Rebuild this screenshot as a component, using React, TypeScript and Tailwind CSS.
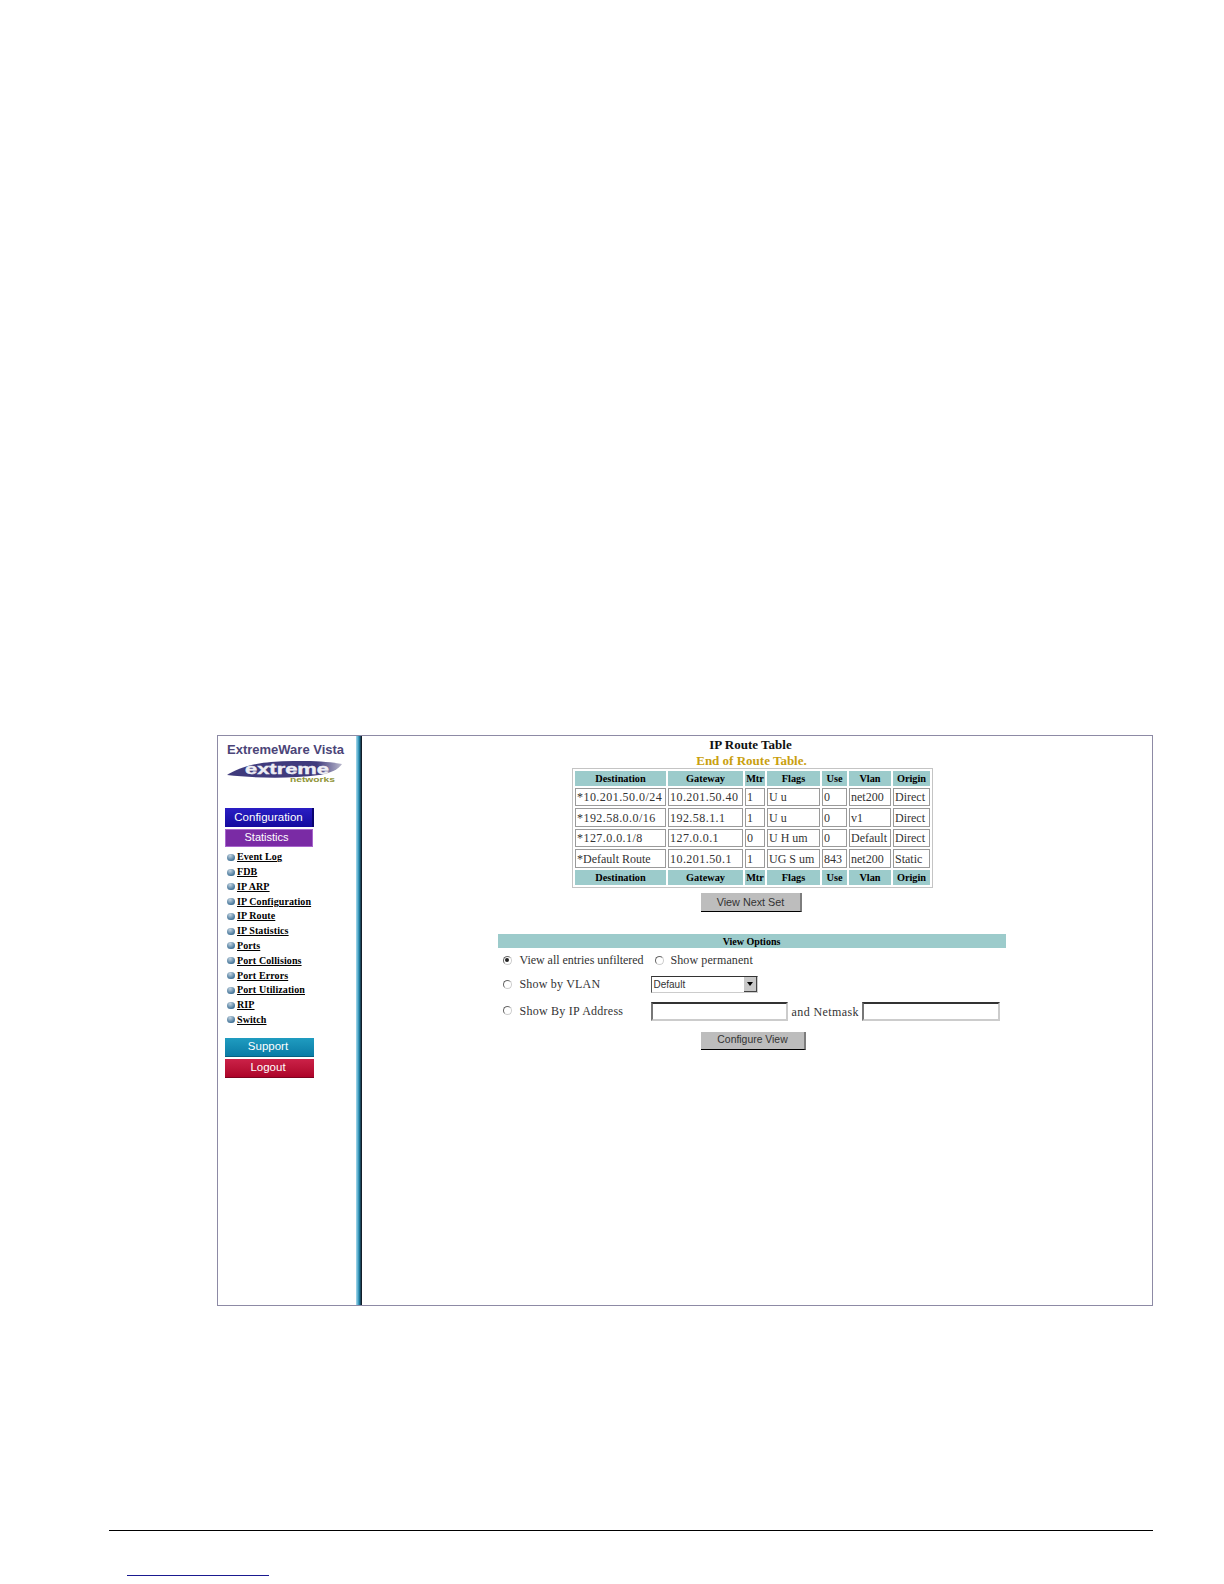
// Route table screen of the switch's web console, as printed on a manual page.
import type { ReactNode } from "react";

const NAV_ITEMS = [
  "Event Log",
  "FDB",
  "IP ARP",
  "IP Configuration",
  "IP Route",
  "IP Statistics",
  "Ports",
  "Port Collisions",
  "Port Errors",
  "Port Utilization",
  "RIP",
  "Switch",
];

const COLUMNS = ["Destination", "Gateway", "Mtr", "Flags", "Use", "Vlan", "Origin"];

const ROUTES = [
  { height: "h-[18px]", cells: ["*10.201.50.0/24", "10.201.50.40", "1", "U u", "0", "net200", "Direct"] },
  { height: "h-[19px]", cells: ["*192.58.0.0/16", "192.58.1.1", "1", "U u", "0", "v1", "Direct"] },
  { height: "h-[18px]", cells: ["*127.0.0.1/8", "127.0.0.1", "0", "U H um", "0", "Default", "Direct"] },
  { height: "h-[19px]", cells: ["*Default Route", "10.201.50.1", "1", "UG S um", "843", "net200", "Static"] },
];

function SideButton({ className, children }: { className: string; children: ReactNode }) {
  return (
    <div
      className={`flex items-center justify-center font-['Liberation_Sans',sans-serif] leading-none text-white ${className}`}
    >
      {children}
    </div>
  );
}

function Logo() {
  return (
    <svg viewBox="0 0 116 22" className="mt-[4px] ml-[2px] block h-[22px] w-[116px]">
      <defs>
        <linearGradient id="swoosh" x1="0" x2="1" y1="0" y2="0">
          <stop offset="0" stopColor="#3f3a7c" />
          <stop offset="0.78" stopColor="#3f3a7c" />
          <stop offset="1" stopColor="#b9b8cc" />
        </linearGradient>
      </defs>
      <path d="M0 14 C10 8 22 3 44 1 C70 -1 100 0 115 3 C112 8 104 12 92 14 C62 18 26 17 0 14 Z" fill="url(#swoosh)" />
      <text
        x="18"
        y="13"
        fontFamily="Liberation Sans, sans-serif"
        fontWeight="700"
        fontSize="14"
        textLength="84"
        lengthAdjust="spacingAndGlyphs"
        fill="#eeeef4"
        stroke="#eeeef4"
        strokeWidth="0.4"
      >
        extreme
      </text>
      <text
        x="63"
        y="20.5"
        fontFamily="Liberation Sans, sans-serif"
        fontWeight="700"
        fontSize="6.5"
        textLength="45"
        lengthAdjust="spacingAndGlyphs"
        fill="#8f9436"
      >
        networks
      </text>
    </svg>
  );
}

function Sidebar() {
  return (
    <aside className="flex w-[138px] shrink-0 flex-col pl-[7px] pt-[6px]">
      <div className="pl-[2px] font-['Liberation_Sans',sans-serif] text-[13px] font-bold leading-[15px] text-[#4b4578]">
        ExtremeWare Vista
      </div>
      <Logo />
      <div className="mt-[25px] flex flex-col gap-[2px]">
        <SideButton className="h-[19px] w-[89px] border-r-2 border-r-[#0a0470] bg-gradient-to-b from-[#2a1ec4] to-[#14099e] text-[11.5px]">
          Configuration
        </SideButton>
        <SideButton className="h-[18px] w-[88px] border border-[#a766cc] bg-[#7a2ba5] pb-[2px] pr-[5px] text-[11px]">
          Statistics
        </SideButton>
      </div>
      <ul className="mt-[3px] grid auto-rows-[14.77px] pl-[2px]">
        {NAV_ITEMS.map((item) => (
          <li key={item} className="flex items-center gap-[2px]">
            <span className="h-[7px] w-[8px] shrink-0 rounded-full bg-[radial-gradient(circle_at_40%_25%,#c3d3e0,#3f7196_75%)]" />
            <a className="font-['Liberation_Serif',serif] text-[10px] font-bold leading-none tracking-[0.1px] text-black underline">
              {item}
            </a>
          </li>
        ))}
      </ul>
      <div className="mt-[10.5px] flex w-[89px] flex-col gap-[2px]">
        <SideButton className="h-[19px] border-b border-b-[#06607f] bg-gradient-to-b from-[#1f9cc0] to-[#0a7ca6] pr-[3px] pt-[1px] text-[11.5px]">
          Support
        </SideButton>
        <SideButton className="h-[19px] border-b border-b-[#7d0320] bg-gradient-to-b from-[#cb2148] to-[#ad0329] pr-[3px] pt-[1px] text-[11.5px]">
          Logout
        </SideButton>
      </div>
    </aside>
  );
}

function HeadRow() {
  return (
    <tr>
      {COLUMNS.map((col) => (
        <th key={col} className="h-[15px] bg-[#9ccbcb] p-0 pt-[1px] text-center text-[10.3px] font-bold leading-none text-black">
          {col}
        </th>
      ))}
    </tr>
  );
}

function RouteTable() {
  return (
    <table className="ml-[2px] w-[361px] table-fixed border-separate border-spacing-[2px] border border-[#c4c4c4] font-['Liberation_Serif',serif]">
      <colgroup>
        <col className="w-[91px]" />
        <col className="w-[75px]" />
        <col className="w-[20px]" />
        <col className="w-[53px]" />
        <col className="w-[25px]" />
        <col className="w-[42px]" />
        <col className="w-[37px]" />
      </colgroup>
      <thead>
        <HeadRow />
      </thead>
      <tbody>
        {ROUTES.map((route) => (
          <tr key={route.cells[0]}>
            {route.cells.map((cell, i) => (
              <td
                key={i}
                className={`${route.height} ${/\d\.\d/.test(cell) ? "tracking-[0.45px]" : "tracking-normal"} overflow-hidden whitespace-nowrap border border-[#9a9a9a] py-0 pl-[1px] pr-0 text-[12px] leading-none text-[#333]`}
              >
                {cell}
              </td>
            ))}
          </tr>
        ))}
      </tbody>
      <tfoot>
        <HeadRow />
      </tfoot>
    </table>
  );
}

function GrayButton({ className, children }: { className: string; children: ReactNode }) {
  return (
    <div
      className={`flex items-center justify-center border-b border-r-2 border-b-black border-r-[#7d7d7d] bg-[#bdbdbd] font-['Liberation_Sans',sans-serif] leading-none text-[#333] ${className}`}
    >
      {children}
    </div>
  );
}

function Radio({ checked = false, className = "" }: { checked?: boolean; className?: string }) {
  return (
    <span
      className={`flex h-[9px] w-[9px] shrink-0 items-center justify-center rounded-full border border-b-[#ccc] border-l-[#666] border-r-[#ccc] border-t-[#666] bg-white ${className}`}
    >
      {checked && <span className="h-[4px] w-[4px] rounded-full bg-[#222]" />}
    </span>
  );
}

function Field({ className }: { className: string }) {
  return (
    <div className={`h-[19px] border-2 border-b-[#ccc] border-l-[#777] border-r-[#ccc] border-t-[#333] bg-white ${className}`} />
  );
}

function ViewOptions() {
  return (
    <div className="mt-[22px] w-[508px] font-['Liberation_Serif',serif] text-[12px] leading-none text-[#333]">
      <div className="flex h-[14px] items-center justify-center bg-[#9ccbcb] pt-[1px] text-[10px] font-bold text-black">
        View Options
      </div>
      <div className="mt-[5px] flex h-[14px] items-center pl-[5px]">
        <Radio checked />
        <span className="ml-[8px] w-[135px] whitespace-nowrap tracking-[-0.03px]">View all entries unfiltered</span>
        <Radio />
        <span className="ml-[7px] whitespace-nowrap tracking-[0.1px]">Show permanent</span>
      </div>
      <div className="mt-[9px] flex h-[17px] items-center pl-[5px]">
        <Radio className="mb-[1px]" />
        <span className="mb-[1px] ml-[8px] w-[131px] whitespace-nowrap tracking-[0.2px]">Show by VLAN</span>
        <div className="flex h-[17px] w-[107px] items-center justify-between border border-b-[#ccc] border-l-[#555] border-r-[#ccc] border-t-[#333] bg-white pl-[2px] font-['Liberation_Sans',sans-serif] text-[10px]">
          Default
          <span className="flex h-[15px] w-[13px] items-center justify-center border-b border-r border-[#444] bg-[#c8c8c8]">
            <span className="h-0 w-0 border-x-[3px] border-t-[4px] border-x-transparent border-t-black" />
          </span>
        </div>
      </div>
      <div className="mt-[9px] flex h-[19px] items-center pl-[5px]">
        <Radio className="mb-[2px]" />
        <span className="mb-[2px] ml-[8px] w-[131px] whitespace-nowrap tracking-[0.25px]">Show By IP Address</span>
        <Field className="w-[137px]" />
        <span className="ml-[4px] w-[70px] whitespace-nowrap tracking-[0.4px]">and Netmask</span>
        <Field className="w-[138px]" />
      </div>
    </div>
  );
}

export default function App() {
  return (
    <div className="h-[1584px] w-[1224px] overflow-hidden bg-white pt-[735px]">
      <div className="ml-[217px] flex h-[571px] w-[936px] border border-[#8d8aa5]">
        <Sidebar />
        <div className="w-[6px] shrink-0 bg-gradient-to-r from-[#a8dcef] via-[#1b8fb5] to-[#0a0a12]" />
        <main className="flex flex-1 flex-col items-center pr-[11px] font-['Liberation_Serif',serif]">
          <h1 className="ml-[-2px] mt-[2px] text-[13px] font-bold leading-[14px] text-[#111]">IP Route Table</h1>
          <p className="mt-[2px] text-[13px] font-bold leading-[14px] text-[#c9a00e]">End of Route Table.</p>
          <RouteTable />
          <GrayButton className="mt-[5px] h-[19px] w-[101px] text-[10.8px]">View Next Set</GrayButton>
          <ViewOptions />
          <GrayButton className="ml-[4px] mt-[11px] h-[18px] w-[105px] text-[10.4px]">Configure View</GrayButton>
        </main>
      </div>
      <div className="ml-[109px] mt-[224px] h-px w-[1044px] bg-black" />
      <div className="ml-[127px] mt-[44px] h-px w-[142px] bg-[#1a1a90]" />
    </div>
  );
}
